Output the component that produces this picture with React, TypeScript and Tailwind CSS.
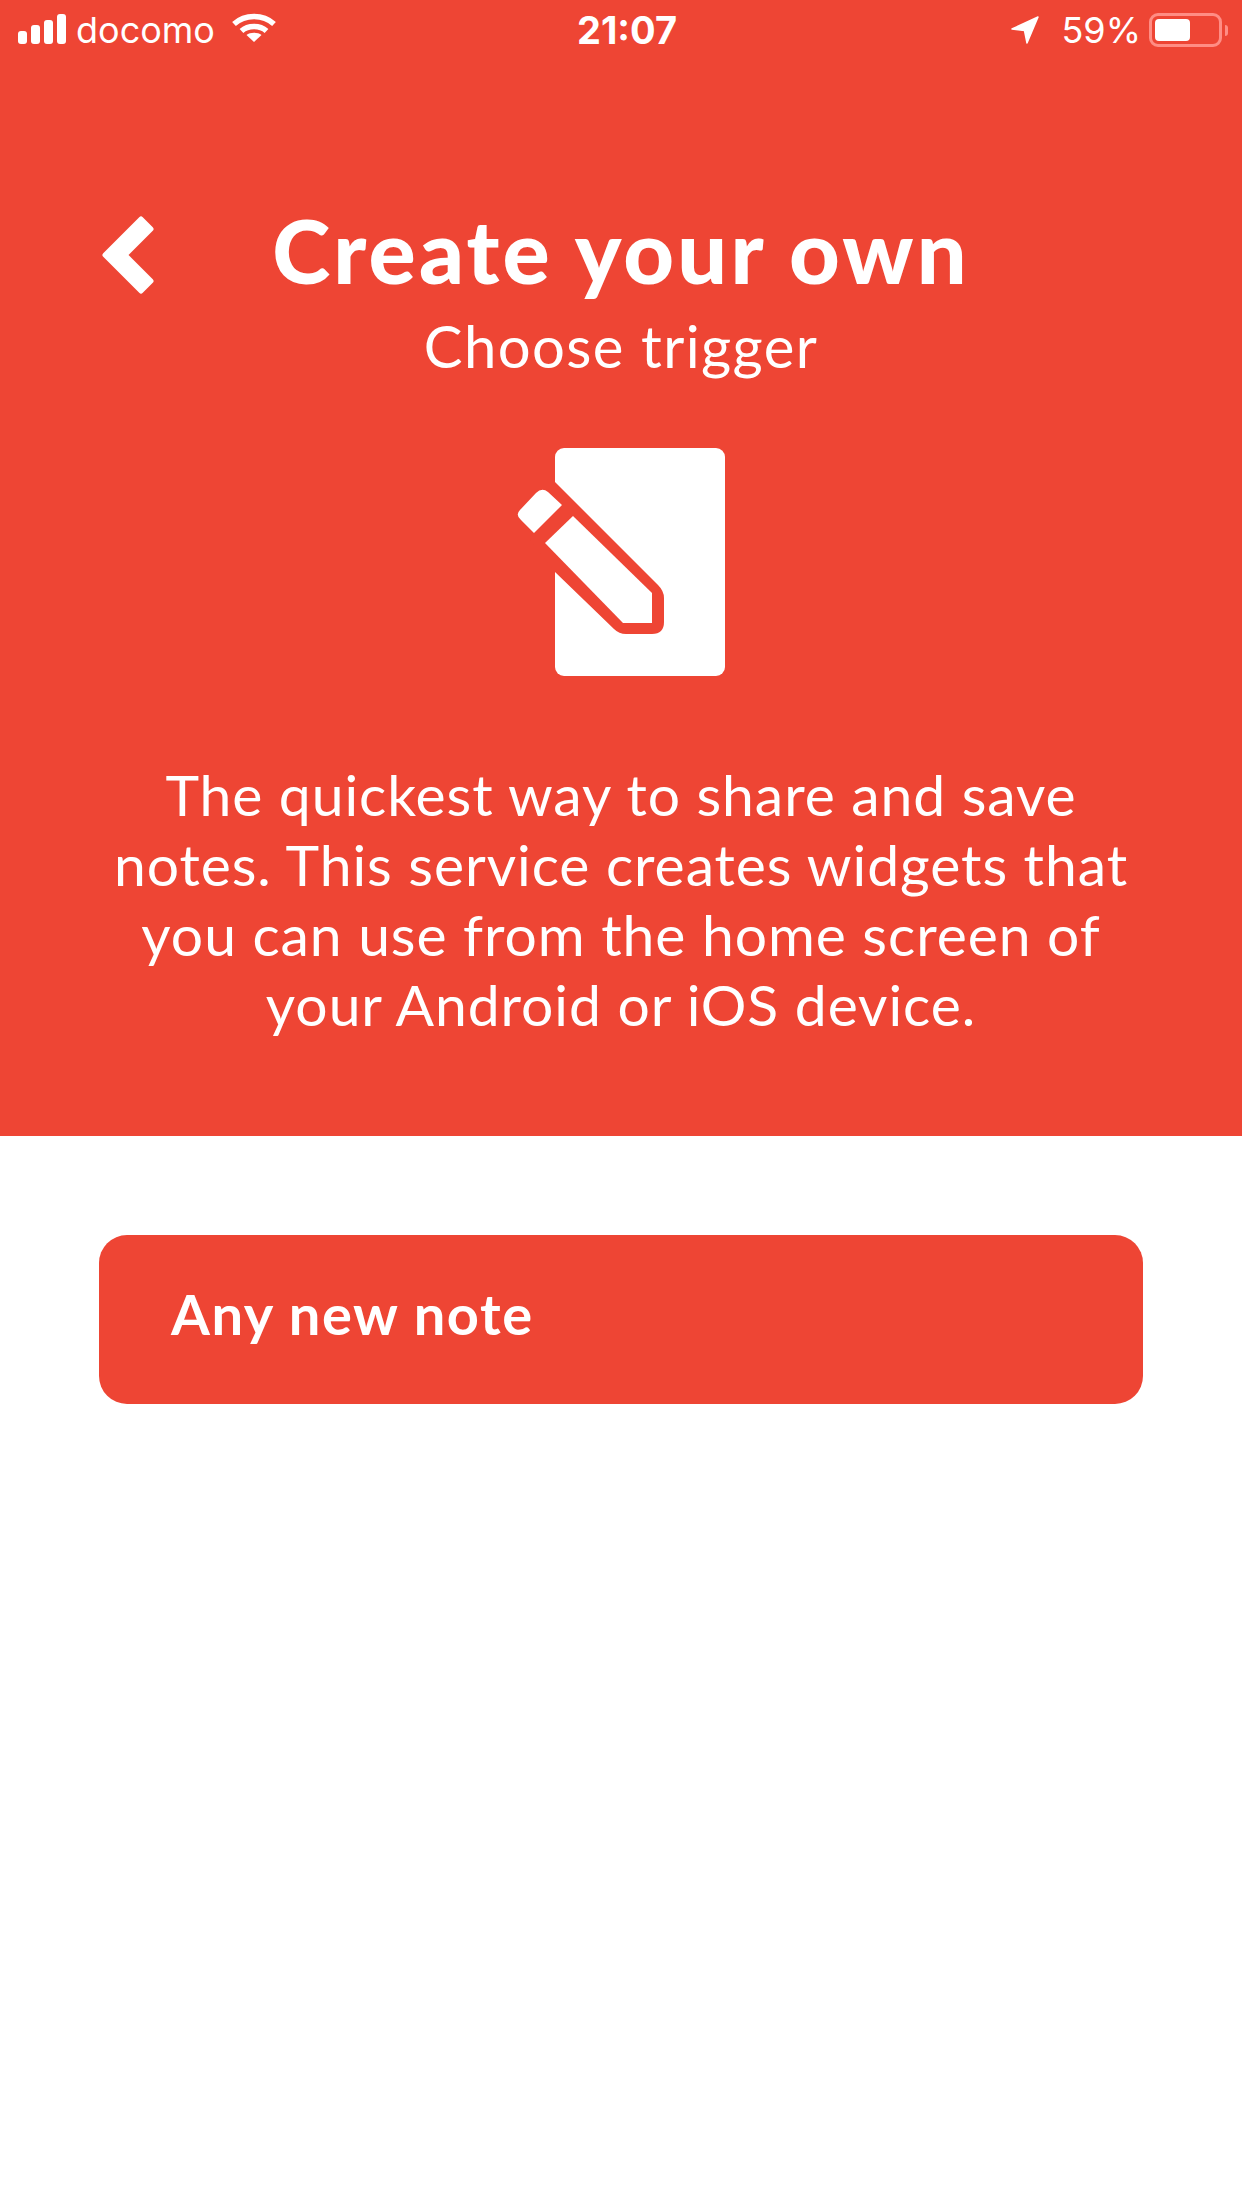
export default function App() {
  return (
    <div className="w-[1242px] h-[2208px] bg-white overflow-hidden" style={{ fontFamily: 'Lato, "Noto Sans", sans-serif' }}>
      <div className="h-[1136px] bg-[#ee4534] text-white flex flex-col items-center">
        <div className="w-full h-[60px] grid grid-cols-[1fr_auto_1fr] items-center pl-[18px] pr-[14px] text-[36px] leading-[60px]" style={{ fontFamily: 'Inter, sans-serif' }}>
          <div className="flex items-center">
            <svg width="48" height="32" viewBox="0 0 48 32" fill="white" className="mr-[10px]">
              <rect x="0" y="17" width="9" height="13" rx="3" />
              <rect x="13" y="11" width="9" height="19" rx="3" />
              <rect x="26" y="6" width="9" height="24" rx="3" />
              <rect x="39" y="0" width="9" height="30" rx="3" />
            </svg>
            <span className="font-normal">docomo</span>
            <svg width="44" height="32" viewBox="0 0 44 32" className="ml-[17px] -mt-[2px]" fill="none" stroke="white" strokeWidth="5.5">
              <path d="M2 11 C13 1 31 1 42 11" />
              <path d="M9.5 18 C16 12 28 12 34.5 18" />
              <path d="M22 29 L14.5 22 C18 19 26 19 29.5 22 Z" fill="white" stroke="none" />
            </svg>
          </div>
          <div className="font-bold text-[38px] ml-[8px]">21:07</div>
          <div className="flex items-center justify-end">
            <svg width="28" height="28" viewBox="0 0 28 28" fill="white" className="mr-[22px]">
              <path d="M1 13 L27 1 L16 27 L13.5 14.5 Z" stroke="white" strokeWidth="1.5" strokeLinejoin="round" />
            </svg>
            <span>59%</span>
            <div className="ml-[8px] w-[73px] h-[34px] border-[3px] border-[#ff8d84] rounded-[9px] p-[3px] flex">
              <div className="w-[35px] bg-white rounded-[4px]" />
            </div>
            <div className="ml-[3px] w-[3px] h-[11px] bg-[#ff8d84] rounded-r-full" />
          </div>
        </div>
        <div className="w-full pl-[100px] pr-[100px] mt-[142px] flex items-center">
          <svg width="56" height="84" viewBox="0 0 56 84" className="shrink-0 mt-[12px]" fill="white" stroke="white" strokeWidth="5" strokeLinejoin="round">
            <path d="M5 41 L41 5 L51 15 L25 41 L51 67 L41 77 Z" />
          </svg>
          <h1 className="flex-1 text-center text-[88px] leading-[94px] font-black tracking-[3.2px] pr-[56px]">Create your own</h1>
        </div>
        <div className="text-[58px] leading-[70px] tracking-[1.4px] mt-[13px]">Choose trigger</div>
        <svg width="260" height="260" viewBox="0 0 260 260" className="mt-[49px] -ml-[2px]">
          <rect x="65" y="18" width="170" height="228" rx="9" fill="white" />
          <path d="M65 52 L168 155 Q174 161 174 168 L174 192 Q174 204 162 204 L136 204 Q129 204 124 199 L65 142 L40 110 L50 70 Z" fill="#ee4534" />
          <path d="M83 86 L162 163 L162 193 L133 193 L55 113 Z" fill="white" />
          <path d="M30 80 L46 63 Q52 57 58 62 L72 75 L44 103 L31 90 Q25 85 30 80 Z" fill="white" />
        </svg>
        <p className="mt-[69px] w-[1100px] text-center text-[57px] leading-[70px] font-normal tracking-[0.95px]">
          The quickest way to share and save<br />
          notes. This service creates widgets that<br />
          you can use from the home screen of<br />
          your Android or iOS device.
        </p>
      </div>
      <div className="px-[99px] pt-[99px]">
        <div className="h-[169px] rounded-[28px] bg-[#ee4534] text-white px-[72px] pt-[44px] text-[56px] leading-[70px] tracking-[1.6px] font-bold">Any new note</div>
      </div>
    </div>
  );
}
